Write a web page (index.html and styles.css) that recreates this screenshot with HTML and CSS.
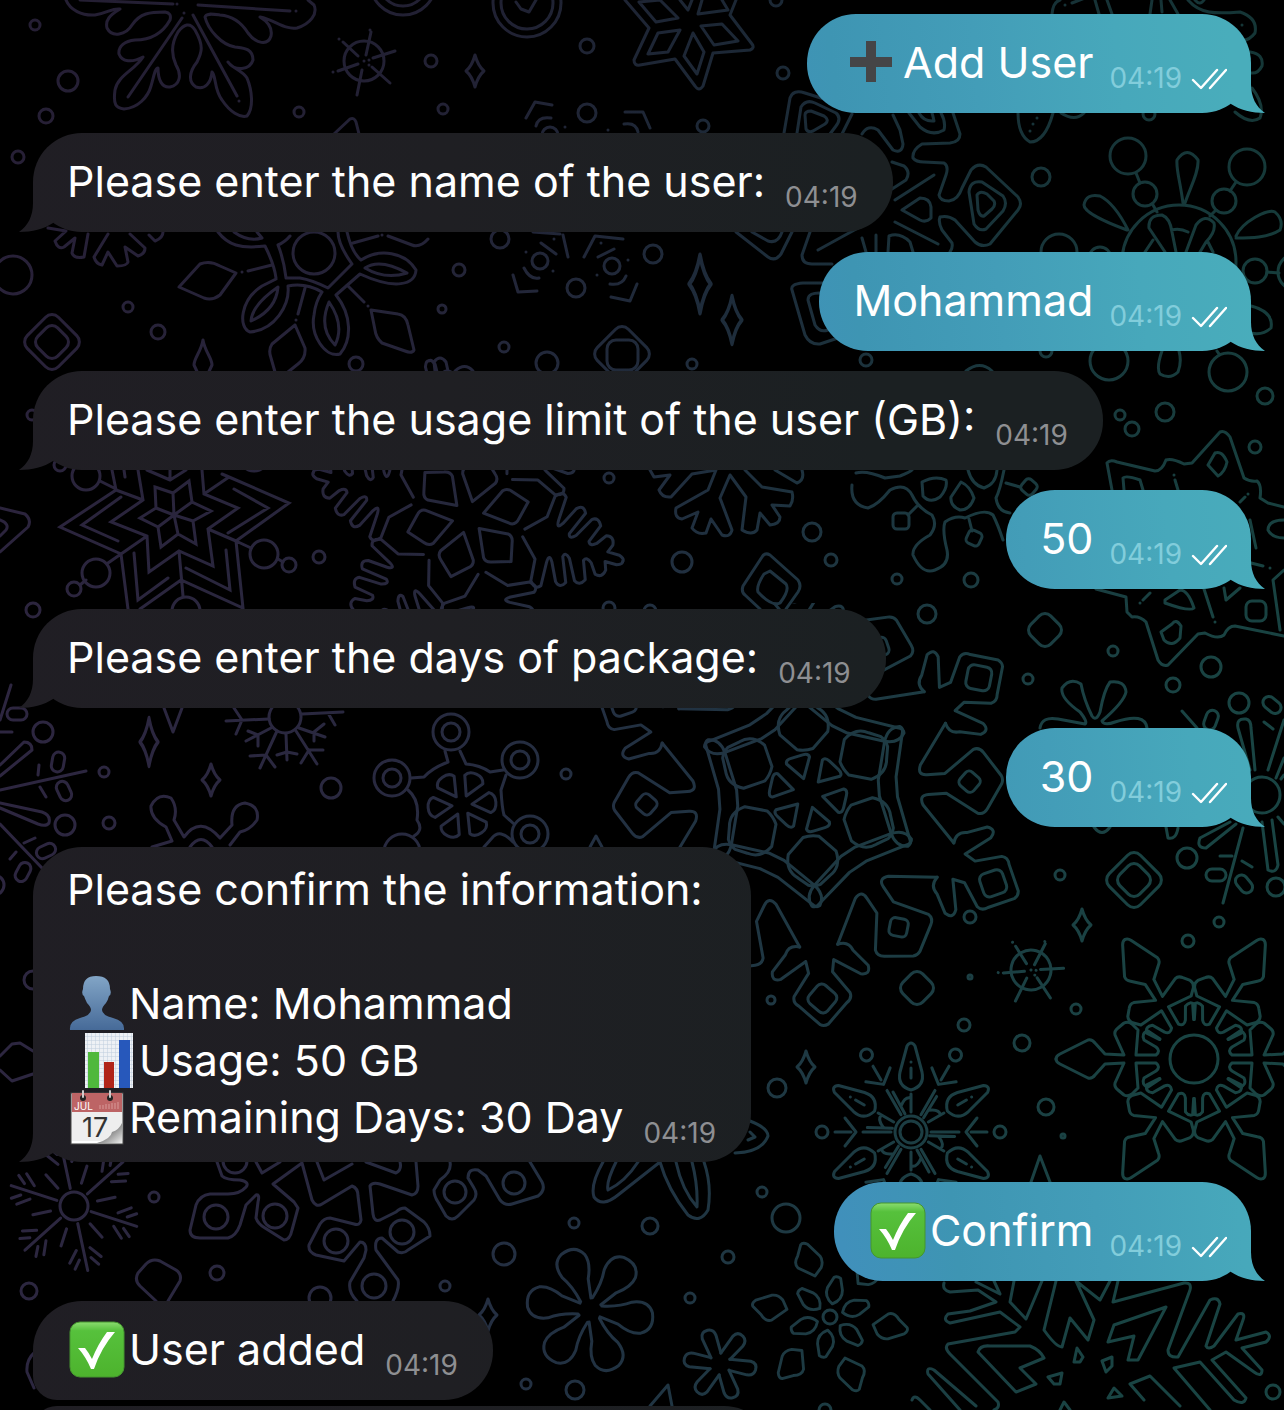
FILE: index.html
```
<!DOCTYPE html>
<html lang="en">
<head>
<meta charset="utf-8">
<meta name="viewport" content="width=device-width, initial-scale=1">
<title>Chat</title>
<link rel="stylesheet" href="styles.css">
</head>
<body>
<svg class="wallpaper" viewBox="0 0 1284 1410" preserveAspectRatio="xMidYMin slice" aria-hidden="true">
<defs>
<linearGradient id="tint" x1="0" y1="0" x2="1" y2="0.15">
<stop offset="0" stop-color="#2e2540"/><stop offset=".35" stop-color="#29283f"/><stop offset=".6" stop-color="#213242"/><stop offset=".8" stop-color="#1c3d43"/><stop offset="1" stop-color="#194443"/>
</linearGradient>
<linearGradient id="dim" x1="0" y1="0" x2="0" y2="1">
<stop offset="0" stop-color="#000" stop-opacity=".2"/><stop offset=".5" stop-color="#000" stop-opacity="0"/>
</linearGradient>
<g id="wheel"><circle r="20"/><path d="M2-6L7-29M9-3L31-10M8 6L26 22M-2 9L-7 34M-6 3L-26 10M-6-5L-21-19M0 0h0M5 4h0M5-1h0M6-31h0M-31 11h0M-25-22h0"/></g>
<g id="sparkle"><path d="M0-16Q3-5 9 0Q3 5 0 16Q-3 5-9 0Q-3-5 0-16Z"/></g>
<g id="gem"><rect x="-14" y="-14" width="28" height="28" rx="8" transform="rotate(45)"/></g>
<g id="gem2"><rect x="-22" y="-22" width="44" height="44" rx="9" transform="rotate(45)"/><rect x="-14" y="-14" width="28" height="28" rx="8" transform="rotate(45)"/></g>
<g id="pill"><rect x="-6" y="-10" width="12" height="20" rx="6"/></g>
<g id="fernHalf"><path d="M58-4L76-22L78-44Q84-52 89-46L88-22Q88-12 93-20L102-38Q108-44 112-36L102-12Q103-6 109-12L120-32Q126-36 130-28L123-10Q125-5 131-10L138-20Q146-22 147-13L144-5L156-5Q162-3 161 0"/></g>
<g id="fern"><use href="#fernHalf"/><use href="#fernHalf" transform="scale(1 -1)"/><path d="M16 0L40-17Q45-19 49-14L62 0L49 14Q45 19 40 17Z" transform="rotate(-30)"/></g>
<g id="wedge"><path d="M10 0L28-10Q34-8 34 0Q34 8 28 10Z"/></g>
<g id="grand">
<path d="M15 0L34-12Q38-12 38-6V6Q38 12 34 12Z" transform="rotate(-13)"/>
<path d="M44-8L60-24Q76-28 84-16L92-6Q94 0 92 6L84 16Q76 28 60 24L44 8Q42 0 44-8Z"/>
<path d="M153-19Q150-30 160-34L176-48Q186-50 184-40L168-14L180-12L202-28Q208-30 212-24L232-4Q234 0 232 4L212 24Q208 30 202 28L180 12L168 14L184 40Q186 50 176 48L160 34Q150 30 153 19"/>
<rect x="-12" y="-12" width="24" height="24" rx="6" transform="translate(206) rotate(45)"/>
<g transform="rotate(30)"><path d="M71-8L80-46Q84-60 96-60Q100-58 98-52L89-10V10L98 52Q100 58 96 60Q84 60 80 46L71 8Z"/><path d="M142-60L114-20Q110-10 120-10H138L168-32Q174-34 178-28L194-4Q196 0 194 4L178 28Q174 34 168 32L138 10H120Q110 10 114 20L142 60"/><rect x="-9" y="-9" width="18" height="18" rx="5" transform="translate(162) rotate(45)"/></g>
</g>
<g id="cogHalf"><path d="M138 0Q138-3 134-5L106-19Q102-20 99-16L89-5L70-4L79-24Q80-28 76-31L70-36Q66-38 62-35L56-29L58-4H38Q33-8 38-12L50-19Q53-26 46-28L34-20"/></g>
<g id="cog"><use href="#cogHalf"/><use href="#cogHalf" transform="scale(1 -1)"/></g>
<g id="bloom"><path d="M42 0Q46-14 60-11L86-4Q92 0 86 4L60 11Q46 14 42 0ZM54 0H64M70 0h0M20 0H38M18-6L40-18M26-10Q36-6 34 0"/><g transform="rotate(30)"><circle cx="89" r="6"/><path d="M76 0H60M66-14L55 0L66 14M48 0H20"/></g></g>
<g id="frost"><path d="M18 0H66M44-7L55-16M54-6L62-12M44 7L55 16M54 6L62 12"/><path d="M24 0H42" transform="rotate(30)"/></g>
<g id="lobe"><path d="M11-6Q28-8 40-15Q56-20 62-8Q67 8 54 14Q44 17 30 9L11 5"/></g>
<g id="nub"><path d="M9-6L30-7Q37-6 36 1Q35 7 28 7L10 5"/></g>
<g id="leafs"><path d="M46 0L60-14Q66-17 72-10L82-3Q84 0 80 4L64 12Q58 14 52 9Z"/><path d="M14 0Q20-10 30-8L42-3Q44 0 42 4L30 8Q20 10 14 0Z" transform="rotate(30)"/></g>
<clipPath id="grandArea"><rect x="500" y="603" width="600" height="500"/></clipPath>
<mask id="lines" maskUnits="userSpaceOnUse" x="0" y="0" width="1284" height="1410">
<g fill="none" stroke="#fff" stroke-width="3" stroke-linecap="round" stroke-linejoin="round">
<path d="M66 0C70 10 82 16 95 15C108 13 112 8 120 9C110 15 105 20 107 28C112 38 126 35 132 25C140 13 150 12 165 12Q172 13 170 20C160 38 145 40 135 40C125 41 118 46 119 54C122 62 132 63 143 57C135 70 118 75 115 90C113 105 116 108 124 109C138 108 148 97 151 86C154 76 155 68 158 68C158 80 162 88 170 87C180 85 182 75 176 65C170 52 172 42 178 32C184 24 190 22 195 30C204 46 202 52 197 62C189 72 188 82 196 87C205 90 211 83 212 72C216 75 214 90 222 100C230 112 240 118 247 116C254 108 252 90 247 78C242 70 232 68 228 62C235 72 250 70 253 60C253 48 243 48 235 47C222 45 208 30 205 17C206 13 212 14 220 15C235 16 243 25 248 33C256 44 268 46 271 36C273 26 265 20 260 17C275 20 285 30 297 28C310 24 318 14 314 5L308 0M80 0L173 4M177 4h0M198 5L290 11M296 11h0M193 15L237 96M239 101h0M182 18L128 97M184 13h0"/>
<use href="#wheel" x="364" y="61"/><use href="#wheel" transform="translate(1031 970) rotate(15)"/>
<circle cx="527" cy="3" r="34"/><circle cx="527" cy="3" r="26"/><path d="M516 2L521 9L529 12L536 0"/><circle cx="403" cy="-18" r="33"/><circle cx="403" cy="-18" r="24"/>
<path d="M625 0L649 28L634 60Q634 66 640 65L675 59L695 86Q699 92 703 86L713 53L750 50Q755 48 752 44L730 15L736 0M639 2L660 0L678 18L656 22ZM680 30L658 33L648 54L668 52ZM693 33L704 52L697 74L684 56ZM701 26L722 24L738 41L714 45ZM722 0L728 10L698 14L702 0M680 0L688 10L692 0"/>
<circle cx="35" cy="25" r="5"/><circle cx="68" cy="81" r="10"/><circle cx="46" cy="116" r="7"/><circle cx="18" cy="157" r="6"/><circle cx="299" cy="112" r="5"/><circle cx="13" cy="275" r="19"/><circle cx="128" cy="307" r="5"/><circle cx="158" cy="332" r="7"/><circle cx="356" cy="364" r="7"/><circle cx="431" cy="61" r="6"/><circle cx="587" cy="46" r="7"/><circle cx="443" cy="109" r="5"/><circle cx="587" cy="113" r="9"/><circle cx="703" cy="126" r="6"/><circle cx="783" cy="73" r="6"/><circle cx="776" cy="0" r="6"/><circle cx="500" cy="239" r="9"/><circle cx="459" cy="270" r="6"/><circle cx="442" cy="309" r="4"/><circle cx="504" cy="347" r="5"/><circle cx="547" cy="363" r="11"/><circle cx="692" cy="364" r="5"/><circle cx="653" cy="254" r="9"/><circle cx="576" cy="288" r="9"/><circle cx="550" cy="135" r="8"/>
<use href="#gem2" x="52" y="342"/><use href="#sparkle" x="475" y="71"/><use href="#sparkle" transform="translate(700 284) scale(1.2 1.8)"/><use href="#sparkle" transform="translate(732 320) scale(1.1 1.5)"/>
<path d="M203 340C201 352 194 358 194 365L200 378M203 340C205 352 212 358 212 365L206 378M334 134L350 119Q354 117 356 122L359 134"/>
<path d="M48 228L66 231L55 241Q58 250 64 247L75 238L72 253Q74 259 84 257L88 234M108 234L94 257Q96 264 102 265L108 252L117 266Q127 266 128 262L125 247L138 256Q145 254 145 248L130 234M149 235L155 241Q163 238 163 232"/>
<circle cx="314" cy="253" r="21"/>
<path d="M218 232C228 245 240 249 265 246C272 260 275 270 276 278M234 232C245 240 255 240 262 238L257 232M278 245C284 260 285 270 286 278L300 278C312 280 320 284 328 288L352 264C342 250 338 240 338 232M278 245Q285 242 290 236M347 232C350 245 355 255 361 260C380 248 405 252 416 270C415 285 395 290 360 274L336 295C352 315 352 340 340 354C325 358 310 335 314 315C315 305 318 298 322 292C310 285 298 284 288 286C290 305 275 330 250 332C238 328 240 300 262 286L276 279M365 268Q380 258 407 273Q385 280 365 268ZM329 302Q345 325 335 345Q318 328 329 302ZM278 287Q276 310 251 321Q252 305 278 287ZM272 265L248 271M242 272h0M305 288L298 314M296 320h0M347 285L364 302M368 306h0M353 243L378 236M382 235h0M179 287L200 264Q210 260 220 266L236 273L220 295Q212 301 204 298ZM371 310L398 314Q406 315 408 325L414 350Q412 354 405 351L382 343Q376 338 375 330ZM295 325L305 348Q306 358 298 364L288 372M295 325L272 344Q268 350 271 358L275 372M388 236L412 245Q420 248 428 239"/>
<path d="M526 118L535 102L552 105M536 126Q538 116 551 118M625 112L643 112L650 128M624 124Q636 122 638 132M565 127h0M608 130h0M563 235L568 257M533 232L560 234M584 257L595 236L623 239M541 243L556 254M598 257L614 249M526 252h0M554 239h0M601 243h0M628 260h0M553 271h0M597 275h0M524 268Q530 280 539 278M513 275L518 292L537 291M610 284Q622 286 626 276M637 284L630 301L611 297"/><circle cx="540" cy="261" r="8"/><circle cx="612" cy="266" r="8"/>
<rect x="-22" y="-22" width="44" height="44" rx="9" transform="translate(622 354) rotate(45)"/><rect x="607" y="340" width="31" height="30" rx="9"/>
<path d="M435 371L434 362Q440 354 446 362L448 371M455 371Q465 362 473 371"/>
<path d="M784 133L790 98Q793 89 805 93L840 104M797 133L801 107Q806 99 815 103L836 113Q842 118 836 126L830 134M805 115L806 129Q808 133 813 131L825 124Q830 120 824 116L811 111Q805 111 805 115M842 134L852 114M909 113L920 127Q932 137 944 130Q946 122 941 113M919 113Q924 122 934 121Q933 116 932 113M953 113L960 134Q960 142 950 143L922 144Q912 150 913 158Q916 162 924 162L944 163Q949 166 946 175L939 195Q940 201 949 201Q958 200 962 188L971 170Q978 162 986 167L1018 197Q1023 204 1018 210L990 244Q982 248 975 242L955 220Q948 215 940 217Q938 222 942 230L952 243Q953 248 950 252M969 192Q970 180 982 182L1003 196Q1008 203 1003 211L986 229Q979 232 974 224ZM977 195Q980 190 987 194L994 201Q996 205 992 209L984 216Q980 217 978 210ZM862 134Q868 124 878 130L893 150Q902 154 903 144L900 130L893 115M892 162L904 166Q911 172 906 180L892 189M934 175L895 200M902 210L920 198Q930 198 931 207L931 218Q926 223 920 220ZM895 222L938 244M876 235L876 252M888 252L889 236Q900 232 910 242L913 252M862 238L866 252M736 232L768 257Q775 262 781 254L792 232M752 232L768 241Q778 244 782 232M810 232L802 255Q802 264 812 264L832 264M818 250L858 228M830 283L803 283Q790 284 792 290L805 335Q810 345 820 344L838 338M822 293Q808 292 808 300L815 325Q820 333 828 330"/>
<circle cx="1041" cy="177" r="9"/>
<path d="M1052 14Q1053 2 1060 0M1065 5h0M1072 3L1085-2M1099 14L1095 0M1107 0L1112 14M1150 14L1152 0M1162 12L1161 0M1178 14L1170 0M1188 0C1200 14 1215 14 1240 12Q1258 18 1255 33Q1248 42 1240 40M1195 0Q1200 6 1204 0M1242 25h0M1250 52Q1264 54 1262 66Q1258 74 1251 73M1252 88Q1265 105 1260 118Q1250 125 1235 112M1018 113Q1018 135 1030 142Q1045 142 1053 113M1037 118h0M1033 124h0M1030 131h0M1061 113Q1075 122 1084 113"/><circle cx="1149" cy="114" r="6"/>
<circle cx="1128" cy="156" r="18"/><circle cx="1247" cy="167" r="18"/><circle cx="1145" cy="194" r="12"/><circle cx="1224" cy="201" r="12"/><circle cx="1255" cy="271" r="12"/><circle cx="1296" cy="272" r="18"/><circle cx="1179" cy="262" r="57"/><circle cx="1059" cy="252" r="18"/><circle cx="1100" cy="258" r="11"/><circle cx="1109" cy="361" r="19"/><circle cx="1228" cy="372" r="19"/><circle cx="1265" cy="396" r="8"/><circle cx="866" cy="360" r="6"/><circle cx="1046" cy="351" r="6"/>
<path d="M1183 203C1180 180 1176 170 1177 160Q1187 145 1198 160C1199 172 1190 188 1185 203M1127 230C1105 222 1084 212 1084 205Q1086 193 1100 196C1112 202 1122 218 1128 230M1236 236C1242 222 1268 208 1275 212Q1284 220 1280 230C1268 238 1250 238 1236 238M1165 252L1149 228Q1148 215 1162 215Q1170 218 1172 232L1176 252M1186 252L1196 225Q1205 213 1214 223Q1216 232 1206 242L1200 252M1172 230Q1180 228 1188 232M1145 252L1153 240M1213 252L1208 242M1136 173L1140 183M1236 182L1230 191M1153 205L1157 212M1216 210L1210 216M1267 272L1279 273M1162 351Q1156 368 1160 374Q1170 380 1178 372Q1182 362 1179 351M1217 351L1219 354M1251 333Q1262 336 1271 328Q1274 312 1251 306M966 371Q980 360 992 371"/>
<circle cx="32" cy="415" r="5"/><circle cx="86" cy="476" r="14"/><circle cx="60" cy="465" r="6"/><circle cx="96" cy="573" r="14"/><circle cx="74" cy="589" r="7"/><circle cx="264" cy="554" r="14"/><circle cx="289" cy="565" r="7"/><circle cx="319" cy="557" r="6"/><circle cx="33" cy="610" r="7"/><circle cx="186" cy="611" r="14"/><circle cx="254" cy="457" r="14"/>
<path stroke-linejoin="miter" d="M112 470L116 490L60 527L121 554L128 609M138 470L143 500L111 522L147 536L149 572L179 551L213 566L208 529L238 508L204 494L202 470M222 474L229 477L289 503L236 541L243 608L181 580L140 609M121 554L147 536M116 490L143 500M229 477L204 494M208 529L236 541M179 551L183 596M121 497L82 525L118 541M134 553L138 600L168 578M186 568L230 590L226 550M228 533L268 508L234 489M124 470L125 477M147 470L170 480L186 470M170 480V470M155 487L173 493L189 481L192 502L211 511L193 521L196 544L178 534L161 547L158 527L140 518L156 508ZM174 515L173 493M174 515L192 502M174 515L193 521M174 515L178 534M174 515L158 527M174 515L156 508M100 481L116 489M108 563L121 554M251 548L236 541M278 559L283 562M80 585L86 580"/>
<path d="M0 508L25 514Q32 520 28 527L0 552M0 520Q10 524 6 530L0 536M11 685L0 720M0 732H12M0 765L24 742Q32 742 32 750L0 776M39 765L38 775M0 790L86 771M40 787L46 797M0 803L42 812Q51 815 49 823Q46 827 38 824L0 808M0 824L42 868M24 843L35 838M10 859L16 852"/>
<use href="#pill" transform="translate(17 714) rotate(90)"/><use href="#pill" transform="translate(58 762) rotate(10)"/><use href="#pill" transform="translate(64 791) rotate(-25)"/><use href="#pill" transform="translate(23 872) rotate(28)"/><use href="#pill" transform="translate(46 851) rotate(65)"/><circle cx="43" cy="732" r="10"/><circle cx="65" cy="825" r="10"/><circle cx="109" cy="823" r="6"/><circle cx="104" cy="772" r="5"/><circle cx="331" cy="788" r="10"/><circle cx="-6" cy="885" r="10"/>
<use href="#sparkle" transform="translate(149 742) scale(1 1.5)"/><use href="#sparkle" x="211" y="780"/><path d="M164 708L173 732L182 708"/>
<circle cx="285" cy="717" r="16"/><path d="M269 719L226 721M242 720L236 734M242 720L234 708M302 714L343 712M328 713L335 725M277 731L260 768M266 755L250 756M266 755L275 767M286 734L287 760M287 752L277 755M287 752L297 754M296 731L317 764M309 750H323M309 750L301 763M271 728L246 741M258 735L248 731M258 735V746M299 728L325 737M314 732L324 724M314 732V741"/>
<path d="M152 847L172 841L166 827Q150 818 151 806Q158 792 171 798Q178 808 174 820L184 837Q200 815 220 838L232 825Q230 805 245 803Q260 806 257 820Q250 830 240 832L230 845M190 847Q201 832 212 847"/>
<g transform="translate(468 517) rotate(16)"><use href="#fern"/><use href="#fern" transform="rotate(60)"/><use href="#fern" transform="rotate(120)"/><use href="#fern" transform="rotate(180)"/><use href="#fern" transform="rotate(240)"/><use href="#fern" transform="rotate(300)"/></g>
<path d="M650 470L654 477L670 475L659 490Q662 498 671 497L692 474L716 470L708 490L676 508Q674 518 682 519L698 512L692 528Q697 535 706 533L711 519L722 535Q730 538 732 530L720 498L730 475L746 497L742 530Q752 536 757 530L760 513L770 525Q780 524 780 517L772 505L790 506Q794 500 792 492L762 487L745 470M775 470L797 483Q805 480 802 470"/>
<circle cx="682" cy="562" r="10"/><circle cx="812" cy="532" r="9"/><circle cx="831" cy="560" r="6"/><circle cx="609" cy="478" r="5"/><circle cx="609" cy="608" r="6"/><circle cx="650" cy="611" r="6"/><circle cx="566" cy="774" r="5"/>
<path d="M786 609L798 592Q802 586 798 580L770 555Q765 552 762 557L743 586Q741 592 745 595L760 609M770 571L786 584Q790 590 780 603Q772 607 758 592Q756 586 764 574Z"/>
<g transform="translate(462 805) rotate(-5)"><use href="#wedge"/><use href="#wedge" transform="rotate(60)"/><use href="#wedge" transform="rotate(120)"/><use href="#wedge" transform="rotate(180)"/><use href="#wedge" transform="rotate(240)"/><use href="#wedge" transform="rotate(300)"/></g>
<circle cx="451" cy="732" r="18"/><circle cx="451" cy="732" r="9"/><circle cx="520" cy="760" r="18"/><circle cx="520" cy="760" r="9"/><circle cx="530" cy="834" r="18"/><circle cx="530" cy="834" r="9"/><circle cx="392" cy="778" r="18"/><circle cx="392" cy="778" r="9"/><circle cx="402" cy="852" r="18"/>
<path d="M445 751L448 762Q432 768 424 777L411 778M460 751L466 764Q480 765 490 772L503 770M506 775L501 790Q502 808 504 815L514 824M513 842Q500 828 492 838L484 847M408 790Q420 800 417 820Q424 830 414 836"/>
<path d="M590 847L596 836L602 847"/>
<g clip-path="url(#grandArea)"><g transform="translate(808 793) rotate(26)"><use href="#grand"/><use href="#grand" transform="rotate(60)"/><use href="#grand" transform="rotate(120)"/><use href="#grand" transform="rotate(180)"/><use href="#grand" transform="rotate(240)"/><use href="#grand" transform="rotate(300)"/></g></g>
<circle cx="1120" cy="415" r="5"/><circle cx="1132" cy="429" r="7"/><circle cx="1165" cy="412" r="9"/><circle cx="1255" cy="447" r="6"/><circle cx="897" cy="579" r="5"/><circle cx="971" cy="580" r="7"/><circle cx="927" cy="614" r="9"/><circle cx="1113" cy="651" r="5"/><circle cx="1028" cy="679" r="5"/><circle cx="1173" cy="685" r="7"/><circle cx="1211" cy="667" r="10"/><circle cx="1239" cy="703" r="10"/><use href="#gem" x="1045" y="630"/>
<path d="M856 473Q866 470 885 478L900 476Q910 472 912 470M852 485Q850 505 868 508Q878 505 890 490Q905 482 912 495Q918 508 932 515Q938 525 930 535Q912 545 913 555Q922 575 935 570Q950 565 947 550Q942 530 945 522Q955 515 965 518Q985 508 993 515Q998 525 1003 540M922 482Q935 475 946 480Q948 488 940 497Q930 504 923 496ZM961 482Q970 486 974 498Q970 510 960 510Q950 506 951 497ZM968 470Q972 485 984 488Q996 484 997 470M918 505L908 515M969 519L972 531M1006 483L1020 487M1004 470Q1000 490 996 498Q998 512 1010 513"/>
<rect x="893" y="513" width="16" height="16" rx="4"/><rect x="-7" y="-7" width="14" height="14" rx="4" transform="translate(974 538) rotate(25)"/><rect x="-7" y="-7" width="14" height="14" rx="4" transform="translate(1029 487) rotate(40)"/>
<path d="M1112 490L1107 463Q1110 459 1117 462L1155 471Q1162 471 1166 460Q1172 458 1184 464L1192 463L1220 432Q1225 430 1230 437L1244 478Q1250 482 1257 481Q1262 485 1260 498L1268 503L1284 507M1124 490L1123 478Q1126 475 1140 480L1143 490M1208 465L1215 453Q1222 450 1227 462Q1225 472 1218 476ZM1175 480L1178 490M1174 475h0M1240 502L1245 497M1248 494h0M1250 520L1256 548M1284 520Q1268 520 1268 530Q1272 538 1284 538M1251 563L1263 566M1270 568h0M1284 570L1273 580L1280 630M1284 636L1235 626Q1228 626 1224 635Q1218 640 1205 633L1198 634L1168 665Q1162 667 1158 660L1146 622Q1140 616 1132 617L1127 612L1126 597L1096 589M1165 600L1180 590Q1188 590 1194 608Q1190 612 1165 603ZM1172 624Q1176 618 1181 626L1180 638Q1172 648 1164 640L1161 632ZM1204 589L1213 617M1215 622h0M1150 593L1143 600M1140 603h0M1224 588L1226 600L1240 588"/><rect x="1246" y="601" width="20" height="20" rx="6"/>
<path d="M1040 728Q1042 716 1058 719L1085 724Q1088 722 1080 712Q1060 698 1062 688Q1070 677 1081 684Q1084 700 1092 716Q1096 722 1100 712Q1104 690 1110 682Q1125 680 1126 692Q1124 702 1102 721Q1104 726 1115 722Q1145 712 1147 728M1094 827Q1102 838 1110 827"/>
<circle cx="1262" cy="795" r="18"/><path d="M1238 728Q1236 718 1246 719Q1251 720 1251 728L1255 770M1238 728L1250 770M1182 711L1197 728M1264 722L1273 729M1268 770L1284 720M1284 758L1276 778M1284 775L1281 779M1166 827L1168 838Q1176 840 1178 828M1230 822L1200 838Q1196 848 1206 848L1236 824M1243 828L1223 903M1262 822L1268 870Q1276 874 1278 865L1272 820M1278 817L1284 824M1220 856H1232M1242 861L1252 867"/><use href="#pill" transform="translate(1211 720) rotate(20)"/><use href="#pill" transform="translate(1272 705) rotate(-50)"/><use href="#pill" transform="translate(1216 875) rotate(90)"/><use href="#pill" transform="translate(1244 884) rotate(-40)"/><circle cx="1187" cy="858" r="10"/><circle cx="1276" cy="887" r="9"/>
<circle cx="1060" cy="875" r="5"/><circle cx="970" cy="917" r="6"/><circle cx="1188" cy="941" r="6"/><circle cx="1219" cy="922" r="5"/><circle cx="771" cy="1000" r="4"/><circle cx="964" cy="1025" r="6"/><circle cx="1076" cy="1009" r="5"/><circle cx="1022" cy="1043" r="8"/><circle cx="777" cy="1088" r="9"/><circle cx="1046" cy="1107" r="8"/><circle cx="970" cy="977" r="2"/><circle cx="1063" cy="1136" r="2"/>
<use href="#sparkle" x="1082" y="925"/><use href="#sparkle" x="806" y="1067"/><use href="#gem" x="917" y="988"/><use href="#gem2" x="1134" y="880"/>
<circle cx="1194" cy="1059" r="24"/><g transform="translate(1194 1059)"><use href="#cog"/><use href="#cog" transform="rotate(60)"/><use href="#cog" transform="rotate(120)"/><use href="#cog" transform="rotate(180)"/><use href="#cog" transform="rotate(240)"/><use href="#cog" transform="rotate(300)"/></g>
<circle cx="911" cy="1132" r="16"/><circle cx="911" cy="1132" r="11"/><g transform="translate(911 1132) rotate(-90)"><use href="#bloom"/><use href="#bloom" transform="rotate(60)"/><use href="#bloom" transform="rotate(120)"/><use href="#bloom" transform="rotate(180)"/><use href="#bloom" transform="rotate(240)"/><use href="#bloom" transform="rotate(300)"/></g>
<path d="M1031 1182L1040 1156L1050 1182M750 1121Q768 1128 768 1136Q762 1152 735 1153M750 1132L755 1137L748 1140M0 1056L12 1044L20 1043L33 1051M0 1070L12 1081L33 1074"/><circle cx="33" cy="980" r="9"/>
<circle cx="74" cy="1206" r="14"/><g transform="translate(74 1206) rotate(18)"><use href="#frost"/><use href="#frost" transform="rotate(60)"/><use href="#frost" transform="rotate(120)"/><use href="#frost" transform="rotate(180)"/><use href="#frost" transform="rotate(240)"/><use href="#frost" transform="rotate(300)"/></g>
<circle cx="154" cy="1197" r="5"/><circle cx="217" cy="1273" r="7"/><circle cx="29" cy="1291" r="8"/><circle cx="320" cy="1298" r="11"/><circle cx="445" cy="1286" r="5"/><circle cx="504" cy="1254" r="11"/><use href="#sparkle" x="488" y="1315"/>
<path d="M168 1301L180 1281Q182 1274 176 1270L160 1261Q152 1258 146 1264L138 1273Q134 1280 140 1286L156 1301M34 1353Q26 1360 27 1372L34 1388"/>
<path d="M217 1162L222 1176Q226 1180 240 1180Q250 1182 246 1187Q240 1194 228 1194L210 1194Q200 1195 196 1205L190 1230Q190 1238 200 1238L228 1238Q236 1236 240 1225L246 1205L256 1195Q260 1194 258 1202L256 1218Q258 1224 265 1228L284 1240Q290 1240 292 1230L298 1208L294 1202L273 1184L302 1163L312 1200Q316 1208 322 1204L352 1186Q358 1188 358 1196L361 1220Q360 1226 354 1224L330 1218Q324 1218 320 1224L309 1245Q308 1252 316 1255L344 1261L360 1242Q366 1242 366 1250L364 1258L350 1282Q348 1292 357 1301M393 1301Q400 1288 398 1280L376 1250Q374 1238 382 1238L398 1252Q404 1254 408 1250L430 1236Q430 1228 424 1222L405 1208Q400 1208 396 1212L380 1220Q374 1222 373 1214L370 1186Q372 1182 380 1184L412 1195Q418 1194 418 1186L416 1162M256 1162L262 1173L280 1162M317 1162L324 1180L352 1164M366 1162L396 1173Q402 1170 400 1162M450 1162Q452 1172 440 1180L434 1190Q434 1196 438 1202L446 1216Q452 1222 458 1216L474 1200Q478 1194 474 1188L468 1178Q468 1168 478 1170L486 1176L500 1200Q505 1206 512 1204L538 1196Q546 1190 542 1182L530 1162"/>
<circle cx="216" cy="1217" r="12"/><circle cx="275" cy="1216" r="12"/><circle cx="336" cy="1241" r="12"/><circle cx="402" cy="1232" r="12"/><circle cx="374" cy="1286" r="12"/><circle cx="235" cy="1161" r="12"/><circle cx="455" cy="1192" r="11"/><circle cx="514" cy="1183" r="11"/>
<circle cx="574" cy="1223" r="5"/><circle cx="650" cy="1226" r="8"/><circle cx="786" cy="1218" r="14"/><circle cx="762" cy="1192" r="5"/><circle cx="728" cy="1257" r="6"/><circle cx="690" cy="1298" r="5"/><circle cx="526" cy="1384" r="5"/><circle cx="575" cy="1390" r="9"/><circle cx="1273" cy="1392" r="7"/><circle cx="825" cy="1410" r="6"/>
<path d="M603 1162Q590 1185 594 1197Q602 1208 618 1195L660 1162Q668 1190 688 1215Q700 1224 708 1210Q712 1185 704 1162M638 1162Q625 1182 608 1190Q606 1182 616 1162M676 1162Q682 1190 697 1207Q698 1185 692 1162M650 1406L668 1385L672 1406"/>
<g transform="translate(590 1310) rotate(10)"><use href="#lobe"/><use href="#lobe" transform="rotate(60)"/><use href="#lobe" transform="rotate(120)"/><use href="#lobe" transform="rotate(180)"/><use href="#lobe" transform="rotate(240)"/><use href="#lobe" transform="rotate(300)"/></g>
<g transform="translate(720 1364) rotate(8)"><use href="#nub"/><use href="#nub" transform="rotate(60)"/><use href="#nub" transform="rotate(120)"/><use href="#nub" transform="rotate(180)"/><use href="#nub" transform="rotate(240)"/><use href="#nub" transform="rotate(300)"/></g>
<circle cx="830" cy="1317" r="7"/><g transform="translate(830 1317) rotate(10) scale(.95)"><use href="#leafs"/><use href="#leafs" transform="rotate(60)"/><use href="#leafs" transform="rotate(120)"/><use href="#leafs" transform="rotate(180)"/><use href="#leafs" transform="rotate(240)"/><use href="#leafs" transform="rotate(300)"/></g>
<path d="M944 1283Q942 1290 950 1292L978 1290L996 1302L970 1311L948 1314Q942 1320 950 1323L1000 1312L1020 1327L1015 1332L948 1344Q944 1348 950 1354L998 1402Q1000 1408 994 1410M976 1282L1000 1294L994 1281M1014 1281L1010 1302L1026 1319L1042 1281M1056 1281L1044 1330Q1056 1347 1062 1347L1070 1318L1088 1340L1094 1320L1076 1281L1100 1300L1110 1281M1118 1281L1113 1302L1184 1283Q1192 1282 1190 1290L1168 1350Q1168 1358 1178 1357L1210 1300Q1218 1296 1220 1304L1206 1346Q1208 1350 1214 1346L1238 1314Q1246 1312 1243 1320L1236 1340L1266 1332Q1273 1336 1266 1342L1242 1348L1262 1370Q1262 1378 1254 1372L1226 1352L1212 1360L1246 1398Q1244 1406 1234 1400L1200 1362L1174 1368L1210 1410M1166 1307L1114 1325L1108 1342L1134 1336L1128 1360L1138 1360ZM978 1352Q980 1345 990 1346H1030Q1040 1350 1044 1358L1020 1368L1036 1384L1016 1392ZM976 1406L934 1370Q926 1366 928 1374L960 1410M912 1400Q914 1394 920 1400L930 1410M1144 1400L1130 1384L1150 1376L1180 1406M1077 1348L1074 1362L1080 1362L1083 1357ZM1112 1357L1102 1361L1106 1372L1112 1366ZM1048 1377L1062 1373L1060 1384L1054 1384ZM1114 1388L1108 1398L1122 1396ZM1060 1410L1064 1402L1070 1410"/>
</g>
</mask>
</defs>
<g mask="url(#lines)"><rect width="1284" height="1410" fill="url(#tint)"/><rect width="1284" height="1410" fill="url(#dim)"/></g>
</svg>

<svg class="sprites" aria-hidden="true">
<defs>
<linearGradient id="green" x1="0" y1="0" x2="0" y2="1"><stop offset="0" stop-color="#8bdc70"/><stop offset=".16" stop-color="#56c13c"/><stop offset="1" stop-color="#4db32d"/></linearGradient>
<linearGradient id="bust" x1="0" y1="0" x2="0" y2="1"><stop offset="0" stop-color="#82a5c6"/><stop offset="1" stop-color="#466a98"/></linearGradient>
<linearGradient id="curl" x1="0" y1="0" x2="1" y2="1"><stop offset="0" stop-color="#fff"/><stop offset=".5" stop-color="#888"/><stop offset="1" stop-color="#eee"/></linearGradient>
<pattern id="grid" width="4" height="4" patternUnits="userSpaceOnUse"><rect width="4" height="4" fill="#eef1f5"/><path d="M0 0H4M0 0V4" stroke="#bfcedd"/></pattern>
<symbol id="ticks" viewBox="0 0 36 22"><path d="M2 12L10 20L26 2M19 20L35 2" fill="none" stroke="#fff" stroke-width="2.4" stroke-linecap="round" stroke-linejoin="round"/></symbol>
<symbol id="check" viewBox="0 0 62 57"><rect x="3" y="1" width="54" height="55" rx="10" fill="url(#green)" stroke="#45952e" stroke-width="1"/><path d="M11 27H18Q22 32 25 38Q31 23 40 11H48Q34 27 27 48H24Q19 36 11 27Z" fill="#fff"/></symbol>
</defs>
</svg>

<main class="chat">
<ol class="messages">
<li class="message out"><div class="bubble tail"><p class="text"><svg class="emoji" viewBox="0 0 62 57" role="img" aria-label="Plus"><path d="M25 7H35V23H51V33H35V48H25V33H9V23H25Z" fill="#454547"/></svg>Add User</p><span class="meta"><time>04:19</time><svg class="ticks" aria-label="Read"><use href="#ticks"/></svg></span></div></li>
<li class="message in"><div class="bubble tail"><p class="text">Please enter the name of the user:</p><span class="meta"><time>04:19</time></span></div></li>
<li class="message out"><div class="bubble tail"><p class="text">Mohammad</p><span class="meta"><time>04:19</time><svg class="ticks" aria-label="Read"><use href="#ticks"/></svg></span></div></li>
<li class="message in"><div class="bubble tail"><p class="text">Please enter the usage limit of the user (GB):</p><span class="meta"><time>04:19</time></span></div></li>
<li class="message out"><div class="bubble tail"><p class="text">50</p><span class="meta"><time>04:19</time><svg class="ticks" aria-label="Read"><use href="#ticks"/></svg></span></div></li>
<li class="message in"><div class="bubble tail"><p class="text">Please enter the days of package:</p><span class="meta"><time>04:19</time></span></div></li>
<li class="message out"><div class="bubble tail"><p class="text">30</p><span class="meta"><time>04:19</time><svg class="ticks" aria-label="Read"><use href="#ticks"/></svg></span></div></li>
<li class="message in"><div class="bubble tail summary">
<p class="line intro">Please confirm the information:</p>
<p class="line"><svg class="emoji" viewBox="0 0 62 57" role="img" aria-label="Person"><path d="M3 55Q2 46 13 43Q24 40 24 35Q24 32 20 28Q18 24 17 21Q14 19 16 14Q16 1 29 1Q43 1 43 14Q45 19 42 21Q41 25 39 28Q35 32 35 35Q35 40 46 43Q58 46 57 55Z" fill="url(#bust)"/></svg>Name: Mohammad</p>
<p class="line"><svg class="emoji wide" viewBox="0 0 72 57" role="img" aria-label="Bar chart"><rect x="18" y="1" width="48" height="55" fill="url(#grid)"/><path d="M21 20H32V56H21Z" fill="#4fb83c"/><path d="M37 30H47V56H37Z" fill="#b02419"/><path d="M52 8H63V56H52Z" fill="#2758bb"/></svg>Usage: 50 GB</p>
<div class="last"><p class="line"><svg class="emoji" viewBox="0 0 62 57" role="img" aria-label="Calendar"><rect x="4" y="4" width="52" height="51" fill="#eee" stroke="#444" stroke-width="1"/><path d="M5 4H55V23H5Z" fill="#bd6465"/><path d="M5 53H55" stroke="#fff" stroke-width="2"/><text class="month" x="7" y="21">JUL</text><path d="M33 20V16M36 20V16M39 20V15M42 20V15M45 20V14M48 20V14M51 20V13" stroke="#d99a9a"/><text class="date" x="15" y="48">17</text><path d="M30 54Q44 50 45 43Q52 41 55 34V54Z" fill="url(#curl)"/><circle cx="16" cy="9" r="3" fill="#222"/><circle cx="43" cy="9" r="3" fill="#222"/><path d="M16 8V2M43 8V2" stroke="#ccc" stroke-width="2" stroke-linecap="round"/></svg>Remaining Days: 30 Day</p><span class="meta"><time>04:19</time></span></div>
</div></li>
<li class="message out"><div class="bubble tail"><p class="text"><svg class="emoji" role="img" aria-label="Done"><use href="#check"/></svg>Confirm</p><span class="meta"><time>04:19</time><svg class="ticks" aria-label="Read"><use href="#ticks"/></svg></span></div></li>
<li class="message in grouped"><div class="bubble"><p class="text"><svg class="emoji" role="img" aria-label="Done"><use href="#check"/></svg>User added</p><span class="meta"><time>04:19</time></span></div></li>
<li class="message in"><div class="bubble next"></div></li>
</ol>
</main>
</body>
</html>
```
FILE: styles.css
```
* { box-sizing: border-box; }
body { margin: 0; background: #000; font-family: Inter, "Liberation Sans", sans-serif; color: #fff; }
.wallpaper { position: absolute; inset: 0; width: 100%; height: 100%; z-index: -1; }
.sprites { position: absolute; width: 0; height: 0; }
.chat { height: 100vh; overflow: hidden; }
.messages { list-style: none; margin: 0; padding: 14px 33px 0; display: flex; flex-direction: column; }
.message { display: flex; margin-bottom: 20px; }
.message.out { justify-content: flex-end; }
.message.grouped { margin-bottom: 6px; }
.bubble { position: relative; display: flex; align-items: flex-end; gap: 20px; padding: 0 35px 0 34px; border-radius: 49px; }
.in .bubble, .in .tail::after { background: linear-gradient(90deg, #201e24 0%, #1f1f23 35%, #1b2022 68%) fixed; }
.out .bubble, .out .tail::after { background: linear-gradient(84deg, #4090bb 60%, #3e95b3 68%, #439db8 78%, #47a8bb 88%, #49adbb 96%) fixed; }
.out .bubble { gap: 16px; padding-right: 24px; }
.tail::after { content: ""; position: absolute; bottom: 0; width: 55px; height: 50px; }
.out .tail::after { right: -14px; clip-path: path("M41 0V21C41 34 46 44 55 50C42 50 30 47 21 41L12 30Z"); }
.in .tail::after { left: -14px; clip-path: path("M14 0V21C14 34 9 44 0 50C13 50 25 47 34 41L43 30Z"); }
.grouped .bubble { border-bottom-left-radius: 24px; }
.next { width: 740px; height: 99px; border-top-left-radius: 24px; }
.text, .line { display: flex; margin: 0; font-size: 43px; line-height: 57px; white-space: nowrap; }
.text { padding: 20px 0 22px; }
.emoji { width: 62px; height: 57px; flex: none; }
.emoji.wide { width: 72px; }
.month { font-size: 10px; fill: #fff; }
.date { font-size: 27px; fill: #333; }
.meta { display: flex; align-items: center; gap: 9px; padding-bottom: 18px; font-size: 28px; line-height: 34px; color: #8e8f92; }
.out .meta { color: #82cddb; }
.ticks { width: 36px; height: 22px; margin-top: 2px; }
.summary { display: block; padding-top: 14px; padding-bottom: 16px; }
.intro { margin-bottom: 57px; }
.last { display: flex; align-items: flex-end; gap: 20px; }
.summary .meta { padding-bottom: 0; margin-bottom: -4px; }
```
